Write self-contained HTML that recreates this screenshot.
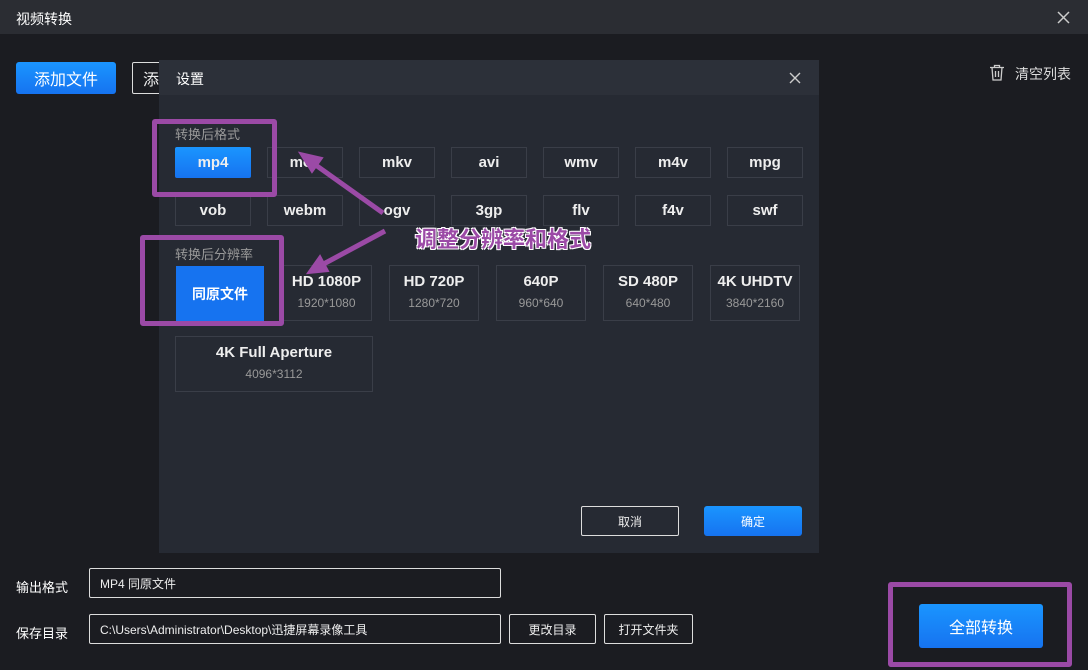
<!DOCTYPE html><html><head><meta charset="utf-8"><style>
*{box-sizing:border-box;margin:0;padding:0}
body{width:1088px;height:670px;background:#1b1c21;font-family:"Liberation Sans","Noto Sans CJK SC",sans-serif;color:#fff;position:relative;overflow:hidden;font-size:13px}
.a{position:absolute}
.blue{background:linear-gradient(#1a95ff,#1673f0);border-radius:3px;color:#fff;display:flex;align-items:center;justify-content:center}
.ob{border:1px solid #ddd;border-radius:2px;display:flex;align-items:center;justify-content:center;color:#eee}
.fb{position:absolute;width:76px;height:31px;border:1px solid #3a3e48;display:flex;align-items:center;justify-content:center;font-weight:bold;font-size:15px;color:#eee}
.rb{position:absolute;height:56px;border:1px solid #3a3e48;text-align:center;color:#eee}
.rb b{display:block;font-size:15px;margin-top:7px}
.rb i{display:block;font-style:normal;font-size:12px;color:#999;margin-top:6px}
.pb{position:absolute;border:5px solid #9b4aa6;border-radius:3px}
</style></head><body>
<div class="a" style="left:0;top:0;width:1088px;height:34px;background:#2b2d33"></div>
<div class="a" style="left:16px;top:9px;font-size:14px">视频转换</div>
<svg class="a" style="left:1057px;top:11px" width="13" height="13"><path d="M1 1L12 12M12 1L1 12" stroke="#ccc" stroke-width="1.5"/></svg>
<div class="a blue" style="left:16px;top:62px;width:100px;height:32px;font-size:16px">添加文件</div>
<div class="a ob" style="left:132px;top:62px;width:40px;height:32px;font-size:16px;justify-content:flex-start;padding-left:10px">添</div>
<svg class="a" style="left:989px;top:64px" width="16" height="17"><path d="M1 3.5H15M5.5 3.5V1.5H10.5V3.5M3 3.5L4 16H12L13 3.5M6.5 7V13M9.5 7V13" stroke="#ccc" stroke-width="1.3" fill="none"/></svg>
<div class="a" style="left:1015px;top:64px;font-size:14px;color:#ddd">清空列表</div>

<div class="a" style="left:159px;top:60px;width:660px;height:493px;background:#262a33">
<div style="height:35px;background:#2c3039;padding:9px 17px;font-size:14px">设置</div>
</div>
<svg class="a" style="left:789px;top:72px" width="12" height="12"><path d="M1 1L11 11M11 1L1 11" stroke="#ccc" stroke-width="1.4"/></svg>
<div class="a" style="left:175px;top:124px;font-size:13px;color:#999">转换后格式</div>
<div class="fb blue" style="left:175px;top:147px;border:none;border-radius:2px">mp4</div>
<div class="fb" style="left:267px;top:147px">mov</div>
<div class="fb" style="left:359px;top:147px">mkv</div>
<div class="fb" style="left:451px;top:147px">avi</div>
<div class="fb" style="left:543px;top:147px">wmv</div>
<div class="fb" style="left:635px;top:147px">m4v</div>
<div class="fb" style="left:727px;top:147px">mpg</div>
<div class="fb" style="left:175px;top:195px">vob</div>
<div class="fb" style="left:267px;top:195px">webm</div>
<div class="fb" style="left:359px;top:195px">ogv</div>
<div class="fb" style="left:451px;top:195px">3gp</div>
<div class="fb" style="left:543px;top:195px">flv</div>
<div class="fb" style="left:635px;top:195px">f4v</div>
<div class="fb" style="left:727px;top:195px">swf</div>
<div class="a" style="left:175px;top:244px;font-size:13px;color:#999">转换后分辨率</div>
<div class="a" style="left:176px;top:266px;width:88px;height:55px;background:#1673f0;display:flex;align-items:center;justify-content:center;font-weight:bold;font-size:14px">同原文件</div>
<div class="rb" style="left:281px;top:265px;width:91px"><b>HD 1080P</b><i>1920*1080</i></div>
<div class="rb" style="left:389px;top:265px;width:90px"><b>HD 720P</b><i>1280*720</i></div>
<div class="rb" style="left:496px;top:265px;width:90px"><b>640P</b><i>960*640</i></div>
<div class="rb" style="left:603px;top:265px;width:90px"><b>SD 480P</b><i>640*480</i></div>
<div class="rb" style="left:710px;top:265px;width:90px"><b>4K UHDTV</b><i>3840*2160</i></div>
<div class="rb" style="left:175px;top:336px;width:198px"><b>4K Full Aperture</b><i>4096*3112</i></div>
<div class="a ob" style="left:581px;top:506px;width:98px;height:30px;font-size:12px">取消</div>
<div class="a blue" style="left:704px;top:506px;width:98px;height:30px;font-size:12px">确定</div>

<div class="pb" style="left:152px;top:119px;width:125px;height:78px"></div>
<div class="pb" style="left:140px;top:235px;width:144px;height:91px"></div>
<div class="pb" style="left:888px;top:582px;width:184px;height:85px"></div>
<svg class="a" style="left:0;top:0" width="1088" height="670"><g stroke="#9b4aa6" stroke-width="5" fill="#9b4aa6">
<line x1="383" y1="213" x2="310" y2="161"/><polygon points="300,153 322,158 312,172" stroke-width="2"/>
<line x1="385" y1="231" x2="318" y2="267"/><polygon points="308,273 320,256 328,271" stroke-width="2"/></g></svg>
<div class="a" style="left:415px;top:222px;font-size:22px;font-weight:bold;color:#9b4aa6;text-shadow:-1px -1px 0 #fff,1px -1px 0 #fff,-1px 1px 0 #fff,1px 1px 0 #fff">调整分辨率和格式</div>

<div class="a" style="left:16px;top:577px;font-size:13px">输出格式</div>
<div class="a ob" style="left:89px;top:568px;width:412px;height:30px;justify-content:flex-start;padding-left:10px;font-size:12px">MP4 同原文件</div>
<div class="a" style="left:16px;top:623px;font-size:13px">保存目录</div>
<div class="a ob" style="left:89px;top:614px;width:412px;height:30px;justify-content:flex-start;padding-left:10px;font-size:12px">C:\Users\Administrator\Desktop\迅捷屏幕录像工具</div>
<div class="a ob" style="left:509px;top:614px;width:87px;height:30px;font-size:12px">更改目录</div>
<div class="a ob" style="left:604px;top:614px;width:89px;height:30px;font-size:12px">打开文件夹</div>
<div class="a blue" style="left:919px;top:604px;width:124px;height:44px;font-size:16px">全部转换</div>
</body></html>
